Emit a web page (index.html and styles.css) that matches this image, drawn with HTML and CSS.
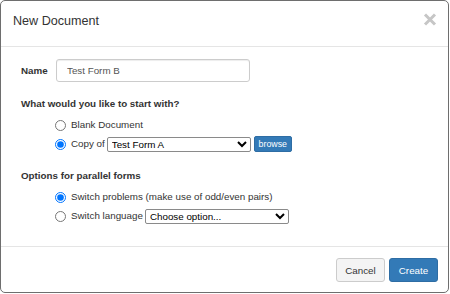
FILE: index.html
```html
<!DOCTYPE html>
<html lang="en">
<head>
    <meta charset="UTF-8">
    <title>New Document</title>
    <link rel="stylesheet" href="styles.css">
</head>
<body>
    <div class="modal">
        <div class="modal-header">
            <h4 class="modal-title">New Document</h4>
            <button type="button" class="close" aria-label="Close">
                <svg width="14" height="13" viewBox="0 0 14 13">
                    <path d="M2 1.5 L12 11.5 M12 1.5 L2 11.5" stroke="#c6c6c6" stroke-width="3" fill="none"/>
                </svg>
            </button>
        </div>

        <div class="modal-body">
            <div class="field-row">
                <label class="field-label" for="docName">Name</label>
                <input type="text" id="docName" class="form-input" value="Test Form B">
            </div>

            <div class="section">
                <div class="section-title">What would you like to start with?</div>
                <div class="options">
                    <label class="option">
                        <input type="radio" name="start"> Blank Document
                    </label>
                    <label class="option">
                        <input type="radio" name="start" checked> Copy of
                        <select class="form-select">
                            <option>Test Form A</option>
                        </select>
                        <button type="button" class="btn-browse">browse</button>
                    </label>
                </div>
            </div>

            <div class="section">
                <div class="section-title">Options for parallel forms</div>
                <div class="options">
                    <label class="option">
                        <input type="radio" name="parallel" checked> Switch problems (make use of odd/even pairs)
                    </label>
                    <label class="option">
                        <input type="radio" name="parallel"> Switch language
                        <select class="form-select">
                            <option>Choose option...</option>
                        </select>
                    </label>
                </div>
            </div>
        </div>

        <div class="modal-footer">
            <button type="button" class="btn btn-default">Cancel</button>
            <button type="button" class="btn btn-primary">Create</button>
        </div>
    </div>
</body>
</html>
```

FILE: styles.css
```css
:root {
    --text: #333333;
    --muted: #555555;
    --line: #e5e5e5;
    --blue: #337ab7;
    --blue-border: #2e6da4;
}

* {
    margin: 0;
    padding: 0;
    box-sizing: border-box;
}

body {
    font-family: "Liberation Sans", Arial, sans-serif;
    font-size: 9.8px;
    line-height: 14px;
    color: var(--text);
    background: #ffffff;
}

.modal {
    width: 449px;
    height: 293px;
    background: #ffffff;
    border: 1px solid #6e6e6e;
    border-radius: 5px;
    display: flex;
    flex-direction: column;
    overflow: hidden;
}

/* header */
.modal-header {
    height: 46px;
    padding: 11px 11px 0 12px;
    border-bottom: 1px solid var(--line);
    display: flex;
    justify-content: space-between;
    align-items: flex-start;
}

.modal-title {
    font-size: 12.6px;
    font-weight: normal;
    line-height: 18px;
    color: var(--text);
}

.close {
    border: none;
    background: transparent;
    margin-top: 1px;
    display: flex;
    cursor: pointer;
}

/* body */
.modal-body {
    flex: 1;
    padding: 12px 20px 0;
}

.field-row {
    display: flex;
    align-items: center;
    height: 23px;
}

.field-label {
    width: 35px;
    font-weight: bold;
}

.form-input {
    width: 194px;
    height: 23px;
    padding: 0 10px;
    border: 1px solid #cccccc;
    border-radius: 3px;
    font-family: inherit;
    font-size: 9.8px;
    color: var(--muted);
    box-shadow: inset 0 1px 1px rgba(0, 0, 0, 0.075);
}

.section {
    margin-top: 15px;
}

.section + .section {
    margin-top: 17px;
}

.section-title {
    font-weight: bold;
}

.options {
    margin-top: 6px;
    padding-left: 35px;
    display: flex;
    flex-direction: column;
    gap: 3px;
}

.option {
    display: flex;
    align-items: center;
    height: 16px;
    white-space: nowrap;
}

.option input[type="radio"] {
    width: 11px;
    height: 11px;
    margin: 0 5px 0 -1px;
}

.form-select {
    width: 144px;
    height: 15px;
    margin-left: 2px;
    border: 1px solid #8a8a8a;
    border-radius: 2px;
    background: #ffffff;
    font-family: inherit;
    font-size: 9.8px;
    color: #000000;
}

.btn-browse {
    height: 16px;
    width: 38px;
    margin-left: 3px;
    background: var(--blue);
    border: 1px solid var(--blue-border);
    border-radius: 2px;
    color: #ffffff;
    font-family: inherit;
    font-size: 8.8px;
    cursor: pointer;
}

/* footer */
.modal-footer {
    height: 46px;
    padding: 11px 10px 0;
    border-top: 1px solid var(--line);
    display: flex;
    justify-content: flex-end;
    align-items: flex-start;
    gap: 4px;
}

.btn {
    height: 24px;
    width: 49px;
    border-radius: 3px;
    font-family: inherit;
    font-size: 9.8px;
    cursor: pointer;
}

.btn-default {
    background: #f4f4f4;
    border: 1px solid #cccccc;
    color: var(--text);
}

.btn-primary {
    background: var(--blue);
    border: 1px solid var(--blue-border);
    color: #ffffff;
}
```
